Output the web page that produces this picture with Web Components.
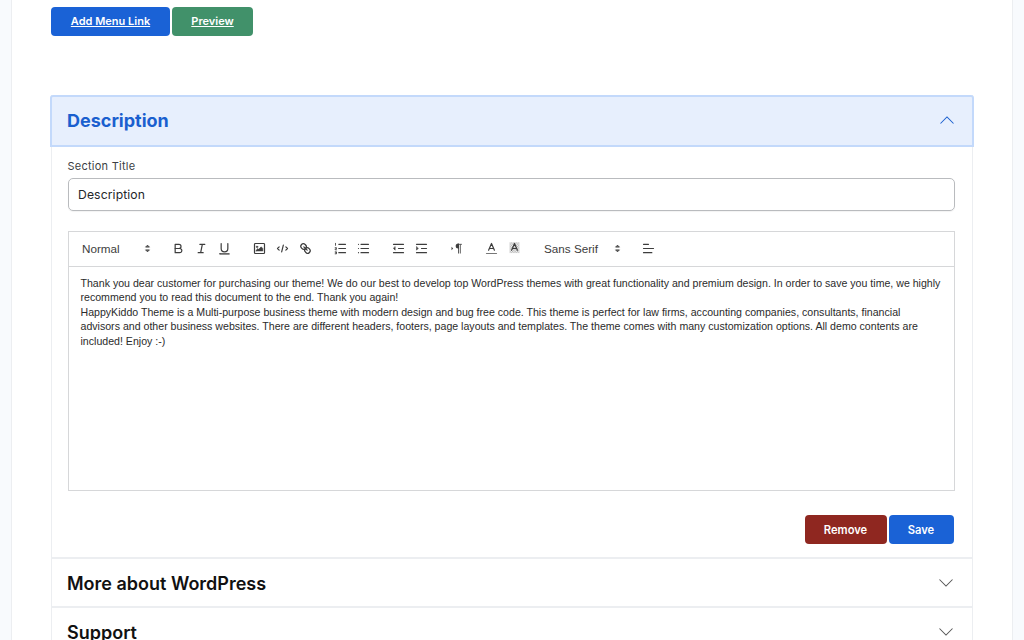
<!DOCTYPE html>
<html>
<head>
<meta charset="utf-8">
<title>Sections</title>
<style>
  html, body { margin: 0; height: 640px; overflow: hidden; background: #f8fafd; }
  body { font-family: Inter, "Liberation Sans", sans-serif; color: #111; }
</style>
</head>
<body>
<page-card>
  <div slot="actions">
    <ui-button color="#1a62d6" width="119" size="11" underline>Add Menu Link</ui-button>
    <ui-button color="#41916a" width="81" size="11" underline>Preview</ui-button>
  </div>
  <accordion-item title="Description" open>
    <text-field label="Section Title" value="Description"></text-field>
    <rich-editor></rich-editor>
    <div slot="footer">
      <ui-button color="#8f2720" width="82" size="11.2">Remove</ui-button>
      <ui-button color="#1a62d6" width="65" size="11.2">Save</ui-button>
    </div>
  </accordion-item>
  <accordion-item title="More about WordPress"></accordion-item>
  <accordion-item title="Support"></accordion-item>
</page-card>

<script>
class PageCard extends HTMLElement {
  constructor() {
    super();
    this.attachShadow({mode: "open"});
    this.shadowRoot.innerHTML = `
      <style>
        :host { display: block; margin: 0 11px 0 11px; height: 640px; box-sizing: border-box;
                background: #fff; border: solid #eceef1; border-width: 0 1px; padding: 7px 39px 0 39px; }
        .actions { height: 88px; }
        ::slotted([slot=actions]) { display: flex; gap: 2px; }
        .list { display: block; }
      </style>
      <div class="actions"><slot name="actions"></slot></div>
      <div class="list"><slot></slot></div>
    `;
  }
}

class UiButton extends HTMLElement {
  constructor() {
    super();
    this.attachShadow({mode: "open"});
    const color = this.getAttribute("color");
    const width = this.getAttribute("width");
    const size = this.getAttribute("size");
    const link = this.hasAttribute("underline");
    this.shadowRoot.innerHTML = `
      <style>
        :host { display: inline-flex; align-items: center; justify-content: center; box-sizing: border-box;
                height: 29px; width: ${width}px; background: ${color}; color: #fff; border-radius: 4px;
                padding-bottom: ${link ? 1 : 0}px;
                font: 600 ${size}px Inter, "Liberation Sans", sans-serif;
                text-decoration: ${link ? "underline" : "none"}; }
      </style>
      <slot></slot>
    `;
  }
}

const chevron = (d, color) => `<svg width="14" height="8" viewBox="0 0 14 8" fill="none" stroke="${color}" stroke-width="1.05"><path d="${d}"/></svg>`;

class AccordionItem extends HTMLElement {
  constructor() {
    super();
    this.attachShadow({mode: "open"});
    const open = this.hasAttribute("open");
    const title = this.getAttribute("title");
    this.shadowRoot.innerHTML = `
      <style>
        :host { display: block; border: solid #eceef1; border-width: 0 1px 2px 1px; }
        .head { display: flex; align-items: center; justify-content: space-between; box-sizing: border-box;
                height: 47px; padding: 0 19px 0 15px; font-size: 18px; font-weight: 600; color: #111; }
        .head span { position: relative; top: .5px; }
        :host([open]) { border-top: 0; }
        :host([open]) .head { height: 52px; margin: 0 -2px 0 -2px; background: #e7effd; color: #1a5fcf;
                font-weight: 700; border: 2px solid #c3d9fb; border-radius: 3px 3px 0 0; padding: 0 18.5px 2px 15px; }
        .body { padding: 11.5px 17.5px 13px 15.5px; }
        .foot { display: block; margin-top: 24px; }
        ::slotted([slot=footer]) { display: flex; justify-content: flex-end; gap: 2px; margin-right: 1px; }
      </style>
      <div class="head"><span>${title}</span>${open ? chevron("M.5 7.5L7 1L13.5 7.5", "#1a5fcf") : chevron("M.5 .5L7 7L13.5 .5", "#555")}</div>
      ${open ? `<div class="body"><slot></slot><div class="foot"><slot name="footer"></slot></div></div>` : ""}
    `;
  }
}

class TextField extends HTMLElement {
  constructor() {
    super();
    this.attachShadow({mode: "open"});
    this.shadowRoot.innerHTML = `
      <style>
        :host { display: block; margin-bottom: 20px; }
        label { display: block; font-size: 11px; line-height: 14px; color: #3c3f44; letter-spacing: .25px; margin-bottom: 5.5px; }
        .box { box-sizing: border-box; height: 33px; border: 1px solid #b9bbbe; border-radius: 5px; padding: 0 9.5px;
               display: flex; align-items: center; font-size: 12.2px; color: #24262a; letter-spacing: .1px; box-shadow: 0 1px 1px #0000000d; }
      </style>
      <label>${this.getAttribute("label")}</label>
      <div class="box">${this.getAttribute("value")}</div>
    `;
  }
}

// toolbar icons, drawn on an 18 unit box
const icons = {
  bold: `<path d="M5,4H9.5A2.5,2.5,0,0,1,12,6.5v0A2.5,2.5,0,0,1,9.5,9H5V4Z"/><path d="M5,9h5.5A2.5,2.5,0,0,1,13,11.5v0A2.5,2.5,0,0,1,10.5,14H5V9Z"/>`,
  italic: `<path d="M7 4H13M5 14H11M8 14L10 4"/>`,
  underline: `<path d="M5,3V9a4,4,0,0,0,4,4H9a4,4,0,0,0,4-4V3"/><rect class="f" x="3" y="15" width="12" height="1" rx=".5"/>`,
  image: `<rect x="3" y="3" width="12" height="12" rx="1"/><circle class="f" cx="6" cy="7" r="1"/><polyline class="f" points="5 12 5 11 7 9 8 10 11 7 13 9 13 12 5 12"/>`,
  code: `<path d="M5 7L3 9L5 11M13 7L15 9L13 11M10 5L8 13"/>`,
  link: `<path d="M7 7L11 11"/><path d="M8.9,4.577a3.476,3.476,0,0,1,.36,4.679A3.476,3.476,0,0,1,4.577,8.9C3.185,7.5,2.035,6.4,4.217,4.217S7.5,3.185,8.9,4.577Z"/><path d="M13.423,9.1a3.476,3.476,0,0,0-4.679-.36,3.476,3.476,0,0,0,.36,4.679c1.392,1.392,2.5,2.542,4.679.36S14.815,10.5,13.423,9.1Z"/>`,
  ordered: `<path d="M7 4H15M7 9H15M7 14H15"/><path stroke-width="1" d="M3 2.8V5.2M2.6 8H4.2V9.4H2.6V10.6H4.2M2.6 13H4.2V15.4H2.6M2.8 14.2H4.2"/>`,
  bullet: `<path d="M6 4H15M6 9H15M6 14H15M3 4H3.01M3 9H3.01M3 14H3.01"/>`,
  outdent: `<path d="M3 14H15M3 4H15M9 9H15"/><polygon class="f" points="5 7 5 11 3 9"/>`,
  indent: `<path d="M3 14H15M3 4H15M9 9H15"/><polygon class="f" points="3 7 3 11 5 9"/>`,
  direction: `<polygon class="f" stroke="none" points="3 11 5 9 3 7"/><path d="M15 4H11" stroke-width="1"/><path class="f" stroke="none" d="M11,3a3,3,0,0,0,0,6h1V3H11Z"/><rect class="f" stroke="none" width="1" height="11" x="11" y="4"/><rect class="f" stroke="none" width="1" height="11" x="13" y="4"/>`,
  color: `<path d="M5.5 11L9 3L12.5 11M11.63 9H6.38"/><path stroke="#777" d="M3 15H15"/>`,
  background: `<rect x="3" y="1.5" width="12" height="13" stroke="none" fill="url(#hatch)"/><path d="M5.5 11L9 3L12.5 11M11.63 9H6.38"/>`,
  align: `<path d="M3 9H15M3 14H13M3 4H9"/>`
};

class RichEditor extends HTMLElement {
  constructor() {
    super();
    this.attachShadow({mode: "open"});
    const btn = (n) => `<span class="btn"><svg viewBox="0 0 18 18">${icons[n]}</svg></span>`;
    const group = (names) => `<span class="group">${names.map(btn).join("")}</span>`;
    const picker = (text, w, pad) => `<span class="picker" style="width:${w}px;padding-left:${pad}px">${text}<svg viewBox="0 0 18 18"><polygon points="7 11 9 13 11 11"/><polygon points="7 7 9 5 11 7"/></svg></span>`;
    this.shadowRoot.innerHTML = `
      <style>
        :host { display: block; font-family: "Liberation Sans", Arial, sans-serif; }
        .bar { box-sizing: border-box; height: 35.5px; border: 1px solid #d6d7d9; display: flex; align-items: center; padding: 0 0 0 6.5px; }
        .group { display: flex; margin-right: 12px; }
        .btn { width: 23px; height: 20px; display: flex; align-items: center; justify-content: center; }
        svg { fill: none; stroke: #3d3d3d; stroke-width: 1.45; stroke-linecap: round; stroke-linejoin: round; }
        .btn svg { width: 15px; height: 15px; }
        .f { fill: #3d3d3d; stroke-width: .6; }
        .picker { display: flex; align-items: center; justify-content: space-between; box-sizing: border-box;
                  font-size: 11.7px; color: #3d3d3d; margin-right: 12px; height: 20px; }
        .picker svg { width: 15px; height: 15px; }
        .picker polygon { fill: #3d3d3d; stroke-width: 1; }
        .text { box-sizing: border-box; height: 224.5px; border: 1px solid #d6d7d9; border-top: 0; padding: 9px 0 0 12px;
                font-size: 10.6px; line-height: 14.6px; color: #2b2b2b; }
        .text p { margin: 0; width: 861px; }
      </style>
      <svg width="0" height="0" style="position:absolute"><defs><pattern id="hatch" width="2" height="2" patternUnits="userSpaceOnUse"><rect width="1" height="1" fill="#aaa" stroke="none"/><rect x="1" y="1" width="1" height="1" fill="#aaa" stroke="none"/></pattern></defs></svg>
      <div class="bar">
        ${picker("Normal", 80, 7)}
        ${group(["bold", "italic", "underline"])}
        ${group(["image", "code", "link"])}
        ${group(["ordered", "bullet"])}
        ${group(["outdent", "indent"])}
        ${group(["direction"])}
        ${group(["color", "background"])}
        ${picker("Sans Serif", 87, 6)}
        ${group(["align"])}
      </div>
      <div class="text">
        <p>Thank you dear customer for purchasing our theme! We do our best to develop top WordPress themes with great functionality and premium design. In order to save you time, we highly recommend you to read this document to the end. Thank you again!</p>
        <p>HappyKiddo Theme is a Multi-purpose business theme with modern design and bug free code. This theme is perfect for law firms, accounting companies, consultants, financial advisors and other business websites. There are different headers, footers, page layouts and templates. The theme comes with many customization options. All demo contents are included! Enjoy :-)</p>
      </div>
    `;
  }
}

customElements.define("page-card", PageCard);
customElements.define("ui-button", UiButton);
customElements.define("accordion-item", AccordionItem);
customElements.define("text-field", TextField);
customElements.define("rich-editor", RichEditor);
</script>
</body>
</html>
